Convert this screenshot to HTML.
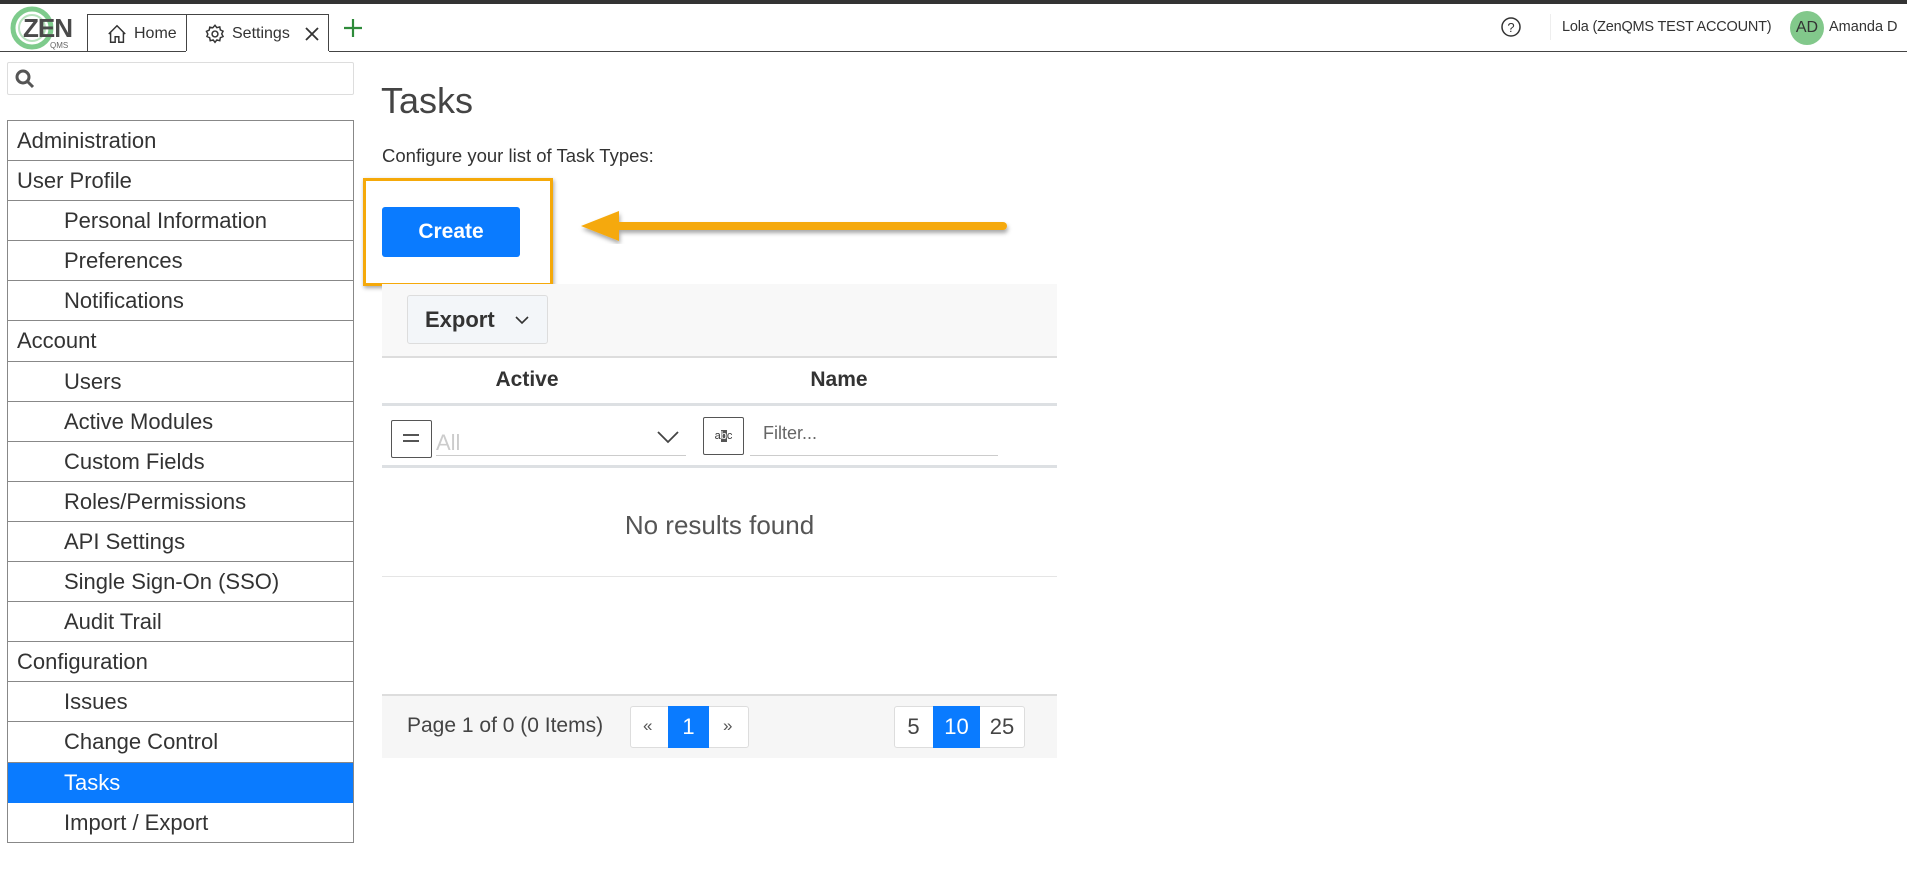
<!DOCTYPE html>
<html><head><meta charset="utf-8">
<style>
*{box-sizing:border-box;margin:0;padding:0}
body{width:1907px;height:873px;background:#fff;font-family:"Liberation Sans",sans-serif;color:#444;position:relative;overflow:hidden}
.abs{position:absolute}
.topline{left:0;top:0;width:1907px;height:4px;background:#333}
.hdr{left:0;top:51px;width:1907px;height:1px;background:#444}
.tab{top:14px;height:38px;border:1px solid #444;border-bottom:none;background:#fff;display:flex;align-items:center;font-size:16px;color:#333}
.side{left:7px;top:120px;width:347px;border:1px solid #888;border-bottom:none}
.side div{height:40.1px;border-bottom:1px solid #888;font-size:22px;line-height:39px;padding-left:9px;color:#333}
.side div.s{padding-left:56px}
.side div.act{background:#0a7bff;color:#fff;border-bottom-color:#0a7bff}
</style></head><body>
<div class="abs topline"></div>
<svg class="abs" style="left:8px;top:5px" width="68" height="46" viewBox="0 0 68 46">
<circle cx="24" cy="23" r="19" fill="none" stroke="#7ecb8c" stroke-width="5"/>
<circle cx="24" cy="23" r="13" fill="none" stroke="#b7e2bd" stroke-width="2"/>
<text x="15" y="32" font-family="Liberation Sans" font-weight="bold" font-size="26" fill="#4a4a4a" letter-spacing="-1">ZEN</text>
<text x="42" y="43" font-family="Liberation Sans" font-size="8" fill="#666">QMS</text>
</svg>
<div class="abs tab" style="left:87px;width:100px;padding-left:18px">
<svg width="22" height="22" viewBox="0 0 24 24" fill="none" stroke="#333" stroke-width="1.6"><path d="M3 12L12 3l9 9M5 10v11h5v-6h4v6h5V10"/></svg><span style="margin-left:6px">Home</span></div>
<div class="abs tab" style="left:186px;width:143px;padding-left:17px;height:39px">
<svg width="22" height="22" viewBox="0 0 24 24" fill="none" stroke="#333" stroke-width="1.6"><circle cx="12" cy="12" r="3.2"/><path d="M12 2.5l2 2.6 3.2-.8.6 3.2 3 1.4-1.5 2.9 1.5 2.9-3 1.4-.6 3.2-3.2-.8-2 2.6-2-2.6-3.2.8-.6-3.2-3-1.4L4.2 12 2.7 9.1l3-1.4.6-3.2 3.2.8z"/></svg>
<span style="margin-left:6px">Settings</span>
<svg style="margin-left:14px" width="16" height="16" viewBox="0 0 16 16" stroke="#333" stroke-width="1.8"><path d="M2 2l12 12M14 2L2 14"/></svg></div>
<svg class="abs" style="left:343px;top:18px" width="20" height="20" viewBox="0 0 20 20" stroke="#2e8b3a" stroke-width="2.2"><path d="M10 1v18M1 10h18"/></svg>
<div class="abs hdr"></div>
<div class="abs" style="left:186px;top:51px;width:143px;height:2px;background:#fff"></div>
<svg class="abs" style="left:1500px;top:16px" width="22" height="22" viewBox="0 0 22 22"><circle cx="11" cy="11" r="9" fill="none" stroke="#333" stroke-width="1.5"/><text x="11" y="16" text-anchor="middle" font-family="Liberation Sans" font-size="13" fill="#333">?</text></svg>
<div class="abs" style="left:1550px;top:14px;width:1px;height:26px;background:#eee"></div>
<div class="abs" style="left:1562px;top:19px;font-size:14.5px;color:#333;letter-spacing:-0.2px">Lola (ZenQMS TEST ACCOUNT)</div>
<div class="abs" style="left:1790px;top:11px;width:34px;height:34px;border-radius:50%;background:#82c88b;font-size:16px;line-height:34px;text-align:center;color:#333">AD</div>
<div class="abs" style="left:1829px;top:19px;font-size:14.5px;color:#333">Amanda D</div>
<div class="abs" style="left:7px;top:62px;width:347px;height:33px;border:1px solid #ddd;border-radius:2px"></div>
<svg class="abs" style="left:14px;top:68px" width="22" height="22" viewBox="0 0 22 22" fill="none" stroke="#555" stroke-width="3"><circle cx="9" cy="9" r="6"/><path d="M13.5 13.5L19 19"/></svg>
<div class="abs side">
<div>Administration</div><div>User Profile</div><div class="s">Personal Information</div><div class="s">Preferences</div><div class="s">Notifications</div><div>Account</div><div class="s">Users</div><div class="s">Active Modules</div><div class="s">Custom Fields</div><div class="s">Roles/Permissions</div><div class="s">API Settings</div><div class="s">Single Sign-On (SSO)</div><div class="s">Audit Trail</div><div>Configuration</div><div class="s">Issues</div><div class="s">Change Control</div><div class="s act">Tasks</div><div class="s">Import / Export</div>
</div>
<div class="abs" style="left:381px;top:80px;font-size:36px;color:#444">Tasks</div>
<div class="abs" style="left:382px;top:145px;font-size:18.5px;color:#333">Configure your list of Task Types:</div>
<div class="abs" style="left:363px;top:178px;width:190px;height:108px;border:3px solid #f5a90a;box-shadow:1px 2px 4px rgba(0,0,0,.35)"></div>
<div class="abs" style="left:382px;top:207px;width:138px;height:50px;background:#0a7bff;border-radius:3px;color:#fff;font-size:21px;font-weight:bold;text-align:center;line-height:50px">Create</div>
<svg class="abs" style="left:575px;top:210px" width="440" height="40" viewBox="0 0 440 40">
<defs><filter id="sh"><feDropShadow dx="1" dy="3" stdDeviation="2" flood-color="#000" flood-opacity=".35"/></filter></defs>
<g filter="url(#sh)"><path d="M40 16H428" stroke="#f5a90a" stroke-width="8" stroke-linecap="round"/><path d="M6 16L44 1V31Z" fill="#f5a90a"/></g></svg>
<div class="abs" style="left:382px;top:284px;width:675px;height:74px;background:#f8f8f8;border-bottom:2px solid #ddd"></div>
<div class="abs" style="left:407px;top:295px;width:141px;height:49px;background:#f3f6f9;border:1px solid #ddd;border-radius:3px;font-size:22px;font-weight:bold;color:#333;line-height:47px;padding-left:17px">Export
<svg style="position:absolute;left:106px;top:19px" width="16" height="10" viewBox="0 0 16 10" fill="none" stroke="#333" stroke-width="1.6"><path d="M2 2l6 6 6-6"/></svg></div>
<div class="abs" style="left:382px;top:358px;width:675px;height:48px;border-bottom:3px solid #dde0e3"></div>
<div class="abs" style="left:452px;top:368px;width:150px;text-align:center;font-size:21px;font-weight:bold;color:#333">Active</div>
<div class="abs" style="left:764px;top:368px;width:150px;text-align:center;font-size:21px;font-weight:bold;color:#333">Name</div>
<div class="abs" style="left:391px;top:420px;width:41px;height:38px;border:1px solid #555;border-radius:2px"></div>
<div class="abs" style="left:403px;top:434px;width:16px;height:2px;background:#555"></div>
<div class="abs" style="left:403px;top:440px;width:16px;height:2px;background:#555"></div>
<div class="abs" style="left:436px;top:430px;font-size:22px;color:#ccc">All</div>
<div class="abs" style="left:436px;top:455px;width:250px;height:1px;background:#ccc"></div>
<svg class="abs" style="left:656px;top:430px" width="24" height="14" viewBox="0 0 24 14" fill="none" stroke="#444" stroke-width="1.8"><path d="M2 2l10 10 10-10"/></svg>
<div class="abs" style="left:703px;top:417px;width:41px;height:38px;border:1px solid #555;border-radius:2px;font-size:11px;line-height:36px;text-align:center;color:#333">a<span style="background:#555;color:#fff">b</span>c</div>
<div class="abs" style="left:763px;top:423px;font-size:18px;color:#666">Filter...</div>
<div class="abs" style="left:750px;top:455px;width:248px;height:1px;background:#ccc"></div>
<div class="abs" style="left:382px;top:465px;width:675px;height:3px;background:#dde0e3"></div>
<div class="abs" style="left:382px;top:510px;width:675px;text-align:center;font-size:26px;color:#555">No results found</div>
<div class="abs" style="left:382px;top:576px;width:675px;height:1px;background:#e5e5e5"></div>
<div class="abs" style="left:382px;top:694px;width:675px;height:64px;background:#f6f6f6;border-top:2px solid #ddd"></div>
<div class="abs" style="left:407px;top:714px;font-size:21px;color:#444">Page 1 of 0 (0 Items)</div>
<div class="abs" style="left:630px;top:706px;width:119px;height:42px;background:#fff;border:1px solid #ddd;border-radius:3px"></div>
<div class="abs" style="left:643px;top:716px;font-size:17px;color:#555">«</div>
<div class="abs" style="left:668px;top:706px;width:41px;height:42px;background:#0a7bff;color:#fff;font-size:22px;text-align:center;line-height:42px">1</div>
<div class="abs" style="left:723px;top:716px;font-size:17px;color:#555">»</div>
<div class="abs" style="left:894px;top:706px;width:131px;height:42px;background:#fff;border:1px solid #ddd;border-radius:3px"></div>
<div class="abs" style="left:894px;top:706px;width:39px;height:42px;font-size:22px;text-align:center;line-height:42px;color:#444">5</div>
<div class="abs" style="left:933px;top:706px;width:47px;height:42px;background:#0a7bff;color:#fff;font-size:22px;text-align:center;line-height:42px">10</div>
<div class="abs" style="left:980px;top:706px;width:44px;height:42px;font-size:22px;text-align:center;line-height:42px;color:#444">25</div>
</body></html>
